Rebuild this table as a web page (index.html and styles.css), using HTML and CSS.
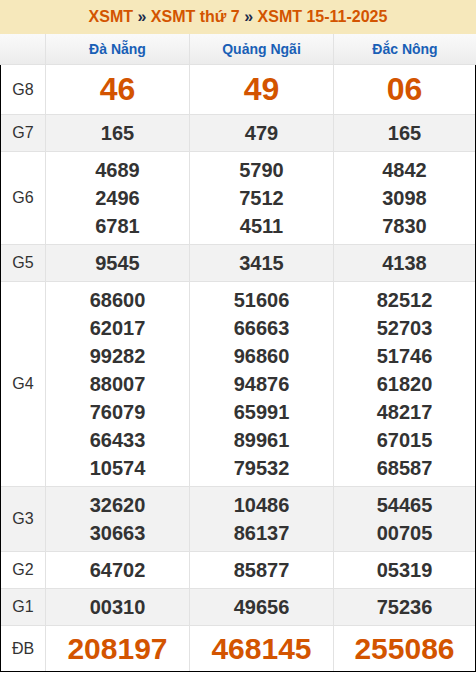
FILE: index.html
```html
<!DOCTYPE html>
<html lang="vi">
<head>
<meta charset="utf-8">
<link rel="stylesheet" href="styles.css">
</head>
<body>
<div class="board">
  <div class="title"><span class="o">XSMT</span> <span class="sep">»</span> <span class="o">XSMT thứ 7</span> <span class="sep">»</span> <span class="o">XSMT 15-11-2025</span></div>
  <div class="head">
    <div class="hc"></div>
    <div class="hc">Đà Nẵng</div>
    <div class="hc">Quảng Ngãi</div>
    <div class="hc">Đắc Nông</div>
  </div>
  <div class="body">
    <div class="row g8">
      <div class="lab">G8</div>
      <div class="c"><span>46</span></div>
      <div class="c"><span>49</span></div>
      <div class="c"><span>06</span></div>
    </div>
    <div class="row alt">
      <div class="lab">G7</div>
      <div class="c"><span>165</span></div>
      <div class="c"><span>479</span></div>
      <div class="c"><span>165</span></div>
    </div>
    <div class="row">
      <div class="lab">G6</div>
      <div class="c"><span>4689</span><span>2496</span><span>6781</span></div>
      <div class="c"><span>5790</span><span>7512</span><span>4511</span></div>
      <div class="c"><span>4842</span><span>3098</span><span>7830</span></div>
    </div>
    <div class="row alt">
      <div class="lab">G5</div>
      <div class="c"><span>9545</span></div>
      <div class="c"><span>3415</span></div>
      <div class="c"><span>4138</span></div>
    </div>
    <div class="row">
      <div class="lab">G4</div>
      <div class="c"><span>68600</span><span>62017</span><span>99282</span><span>88007</span><span>76079</span><span>66433</span><span>10574</span></div>
      <div class="c"><span>51606</span><span>66663</span><span>96860</span><span>94876</span><span>65991</span><span>89961</span><span>79532</span></div>
      <div class="c"><span>82512</span><span>52703</span><span>51746</span><span>61820</span><span>48217</span><span>67015</span><span>68587</span></div>
    </div>
    <div class="row alt">
      <div class="lab">G3</div>
      <div class="c"><span>32620</span><span>30663</span></div>
      <div class="c"><span>10486</span><span>86137</span></div>
      <div class="c"><span>54465</span><span>00705</span></div>
    </div>
    <div class="row">
      <div class="lab">G2</div>
      <div class="c"><span>64702</span></div>
      <div class="c"><span>85877</span></div>
      <div class="c"><span>05319</span></div>
    </div>
    <div class="row alt">
      <div class="lab">G1</div>
      <div class="c"><span>00310</span></div>
      <div class="c"><span>49656</span></div>
      <div class="c"><span>75236</span></div>
    </div>
    <div class="row db">
      <div class="lab">ĐB</div>
      <div class="c"><span>208197</span></div>
      <div class="c"><span>468145</span></div>
      <div class="c"><span>255086</span></div>
    </div>
  </div>
</div>
</body>
</html>
```
FILE: styles.css
```css
html, body {
  margin: 0;
  padding: 0;
  background: #fff;
}
body {
  font-family: "Liberation Sans", Arial, sans-serif;
  color: #333;
}
.board {
  width: 476px;
}
.title {
  height: 34px;
  line-height: 34px;
  background: #f6e8bb;
  text-align: center;
  font-size: 16px;
  font-weight: bold;
}
.title .o {
  color: #d35400;
}
.title .sep {
  color: #1b2a4a;
}
.head {
  display: grid;
  grid-template-columns: 45px 144px 144px 143px;
  height: 30px;
  border-bottom: 1px solid #e2e2e2;
  background: linear-gradient(#fafafa, #ececec);
}
.hc {
  border-left: 1px solid #e2e2e2;
  display: flex;
  align-items: center;
  justify-content: center;
  font-size: 14px;
  font-weight: bold;
  color: #195fb6;
}
.hc:first-child {
  border-left: none;
}
.body {
  border-left: 1px solid #000;
  border-right: 1px solid #000;
  border-bottom: 1px solid #000;
}
.row {
  display: grid;
  grid-template-columns: 44px 144px 144px 142px;
  border-bottom: 1px solid #e2e2e2;
}
.row:last-child {
  border-bottom: none;
}
.row.alt {
  background: #f2f2f2;
}
.lab {
  display: flex;
  align-items: center;
  justify-content: center;
  font-size: 16px;
  color: #333;
}
.c {
  border-left: 1px solid #e2e2e2;
  display: flex;
  flex-direction: column;
  align-items: center;
  padding: 4px 0;
  font-size: 20px;
  font-weight: bold;
  line-height: 28px;
  color: #333;
}
.g8 .c {
  font-size: 32px;
  line-height: 41px;
  color: #d35400;
}
.db .c {
  font-size: 30px;
  line-height: 37px;
  color: #d35400;
}
```
